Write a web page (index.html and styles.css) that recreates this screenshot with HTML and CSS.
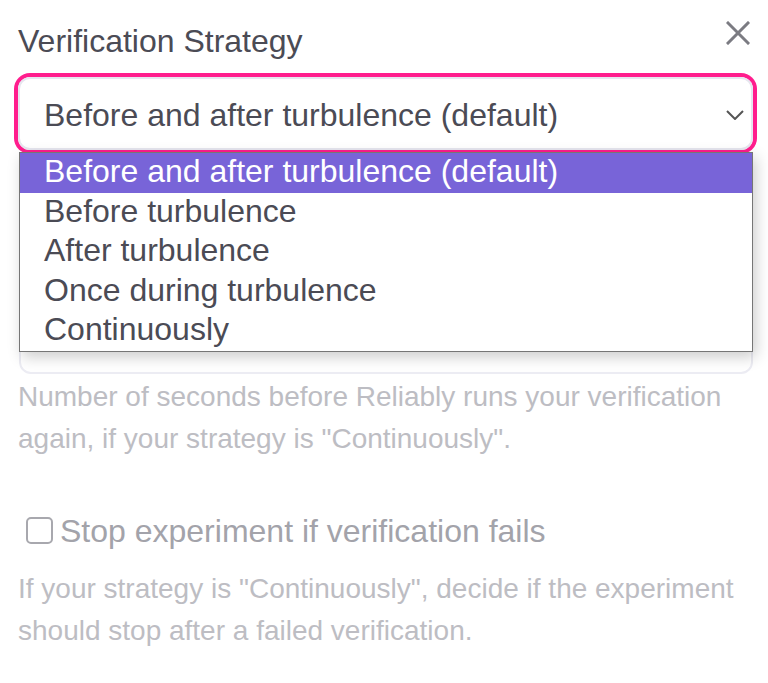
FILE: index.html
```html
<!DOCTYPE html>
<html lang="en">
<head>
<meta charset="utf-8">
<title>Verification Strategy</title>
<link rel="stylesheet" href="styles.css">
</head>
<body>
<div class="panel">
  <div class="header">
    <h2 class="title">Verification Strategy</h2>
    <button class="close" aria-label="Close">
      <svg width="24" height="24" viewBox="0 0 24 24"><path d="M2 2 L22 22 M22 2 L2 22" stroke="#7b7b82" stroke-width="3" fill="none" stroke-linecap="square"/></svg>
    </button>
  </div>

  <div class="select-wrap">
    <div class="select">
      <span class="select-value">Before and after turbulence (default)</span>
      <svg class="chevron" width="18" height="10" viewBox="0 0 18 10"><path d="M1 1 L9 9 L17 1" stroke="#555" stroke-width="2" fill="none"/></svg>
    </div>
    <ul class="dropdown">
      <li class="option selected">Before and after turbulence (default)</li>
      <li class="option">Before turbulence</li>
      <li class="option">After turbulence</li>
      <li class="option">Once during turbulence</li>
      <li class="option">Continuously</li>
    </ul>
  </div>

  <div class="faded">
    <div class="input"></div>
    <p class="help">Number of seconds before Reliably runs your verification again, if your strategy is "Continuously".</p>

    <label class="check-row">
      <span class="checkbox"></span>
      <span class="check-label">Stop experiment if verification fails</span>
    </label>
    <p class="help help2">If your strategy is "Continuously", decide if the experiment should stop after a failed verification.</p>
  </div>
</div>
</body>
</html>
```

FILE: styles.css
```css
* { box-sizing: border-box; }
html, body { margin: 0; padding: 0; background: #fff; }
body { font-family: "Liberation Sans", Arial, sans-serif; color: #4b4b55; }

.panel {
  padding: 17px 15px 0 18px;
}

.header {
  display: flex;
  justify-content: space-between;
  align-items: flex-start;
}
.title {
  margin: 0;
  font-size: 32px;
  font-weight: 400;
  line-height: 48px;
  color: #4b4b55;
}
.close {
  background: none;
  border: none;
  padding: 0;
  margin: 4px 3px 0 0;
  width: 24px;
  height: 24px;
  cursor: pointer;
}
.close svg { display: block; }

.select-wrap {
  position: relative;
  margin-top: 12px;
}
.select {
  height: 73px;
  border: 2px solid #e6e6ef;
  border-radius: 12px;
  box-shadow: 0 0 0 4px #ff1d8d;
  display: flex;
  align-items: center;
  justify-content: space-between;
  padding: 3px 7px 0 24px;
  font-size: 32px;
  color: #4b4b55;
}
.chevron { display: block; margin-top: -1px; }

.dropdown {
  position: absolute;
  top: 75px;
  left: 1px;
  right: 0;
  margin: 0;
  padding: 0;
  list-style: none;
  background: #fff;
  border: 1px solid #767676;
  box-shadow: 3px 5px 14px rgba(0, 0, 0, 0.2);
  z-index: 5;
}
.option {
  font-size: 32px;
  line-height: 34px;
  height: 39.5px;
  padding: 1px 0 4.5px 24px;
  color: #4b4b55;
  white-space: nowrap;
}
.option.selected {
  background: #7864d8;
  color: #fff;
}

.faded {
  margin-top: 151px;
}
.input {
  height: 73px;
  border: 2px solid #ececf3;
  border-radius: 12px;
  margin-left: 1px;
}
.help {
  margin: 2px 0 0;
  font-size: 28px;
  line-height: 42px;
  color: #bdbdc3;
}
.check-row {
  display: flex;
  align-items: center;
  margin-top: 47px;
  height: 48px;
  padding-left: 8px;
}
.checkbox {
  width: 27px;
  height: 27px;
  border: 2px solid #a8a8ae;
  border-radius: 5px;
  margin-right: 7px;
  flex: none;
  margin-top: -1px;
}
.check-label {
  font-size: 32px;
  line-height: 48px;
  color: #a3a3aa;
}
.help2 {
  margin-top: 13px;
}
```
